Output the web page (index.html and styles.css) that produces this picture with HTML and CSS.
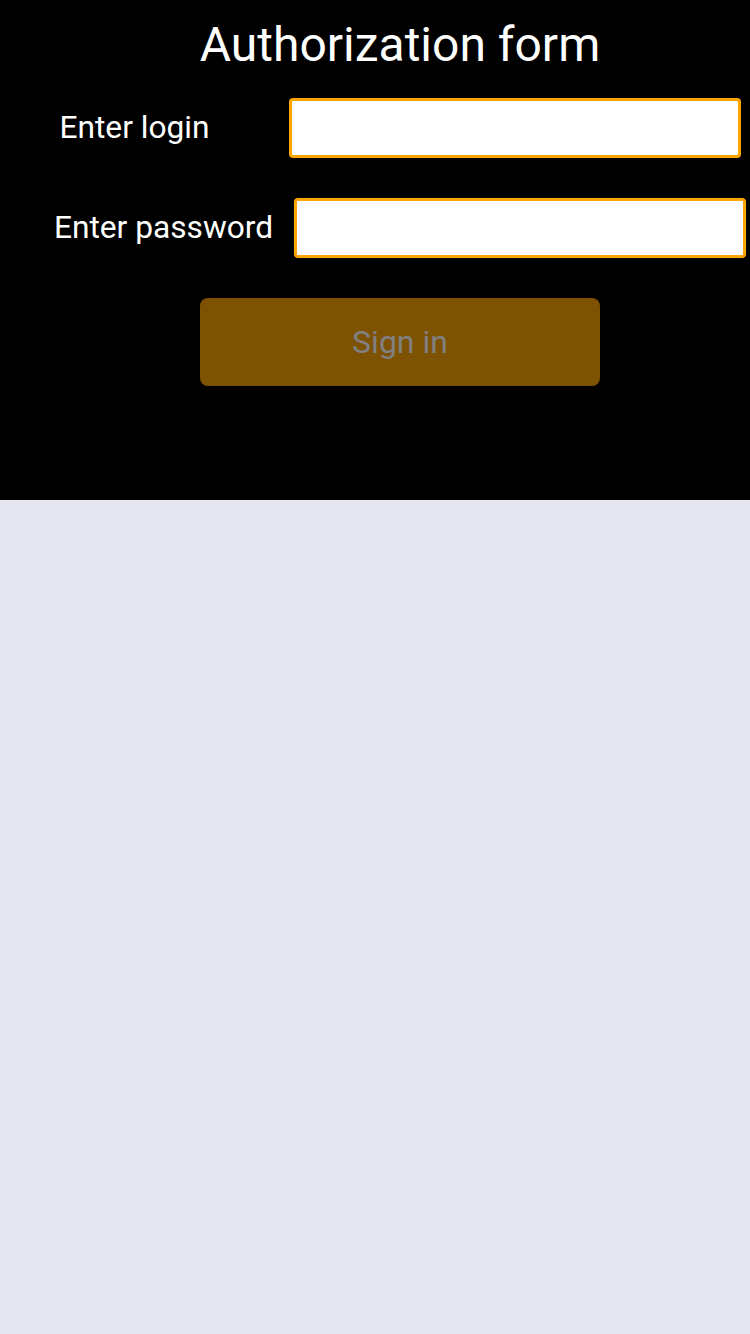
FILE: index.html
```html
<!DOCTYPE html>
<html>
<head>
<meta charset="utf-8">
<link rel="stylesheet" href="styles.css">
</head>
<body>
<div class="screen">
  <div class="form">
    <h1 class="title">Authorization form</h1>
    <div class="row">
      <span class="label label-login">Enter login</span>
      <input class="field" type="text">
    </div>
    <div class="row">
      <span class="label label-password">Enter password</span>
      <input class="field" type="password">
    </div>
    <button class="signin" type="button">Sign in</button>
  </div>
  <div class="rest"></div>
</div>
</body>
</html>
```
FILE: styles.css
```css
html, body {
  margin: 0;
  padding: 0;
  width: 750px;
  height: 1334px;
  overflow: hidden;
  background: #e6e6f0;
  font-family: Roboto, "Liberation Sans", sans-serif;
}
.screen {
  width: 750px;
  height: 1334px;
  overflow: hidden;
  display: flex;
  flex-direction: column;
}
.form {
  width: 800px;
  height: 500px;
  background: #000;
  display: flex;
  flex-direction: column;
  align-items: center;
  box-sizing: border-box;
  flex: none;
}
.title {
  margin: 16px 0 0 0;
  height: 58px;
  line-height: 58px;
  font-size: 48px;
  font-weight: 400;
  color: #fff;
}
.row {
  display: flex;
  align-items: center;
  justify-content: center;
  height: 60px;
}
.row + .row { margin-top: 40px; }
.title + .row { margin-top: 24px; }
.label {
  color: #fff;
  font-size: 31.7px;
  line-height: 40px;
}
.label-login { margin-right: 79px; }
.label-password { margin-right: 21px; }
.field {
  width: 452px;
  height: 60px;
  box-sizing: border-box;
  border: 3px solid #ffa500;
  border-radius: 4px;
  background: #fff;
  margin: 0;
  padding: 0 10px;
  outline: none;
}
.signin {
  margin-top: 40px;
  width: 400px;
  height: 88px;
  border: none;
  border-radius: 8px;
  background: #7e5203;
  color: #808080;
  font-family: Roboto, "Liberation Sans", sans-serif;
  font-size: 32px;
  line-height: 82px;
  padding: 0;
}
.rest {
  flex: 1;
  background: #e6e6f0;
}
```
